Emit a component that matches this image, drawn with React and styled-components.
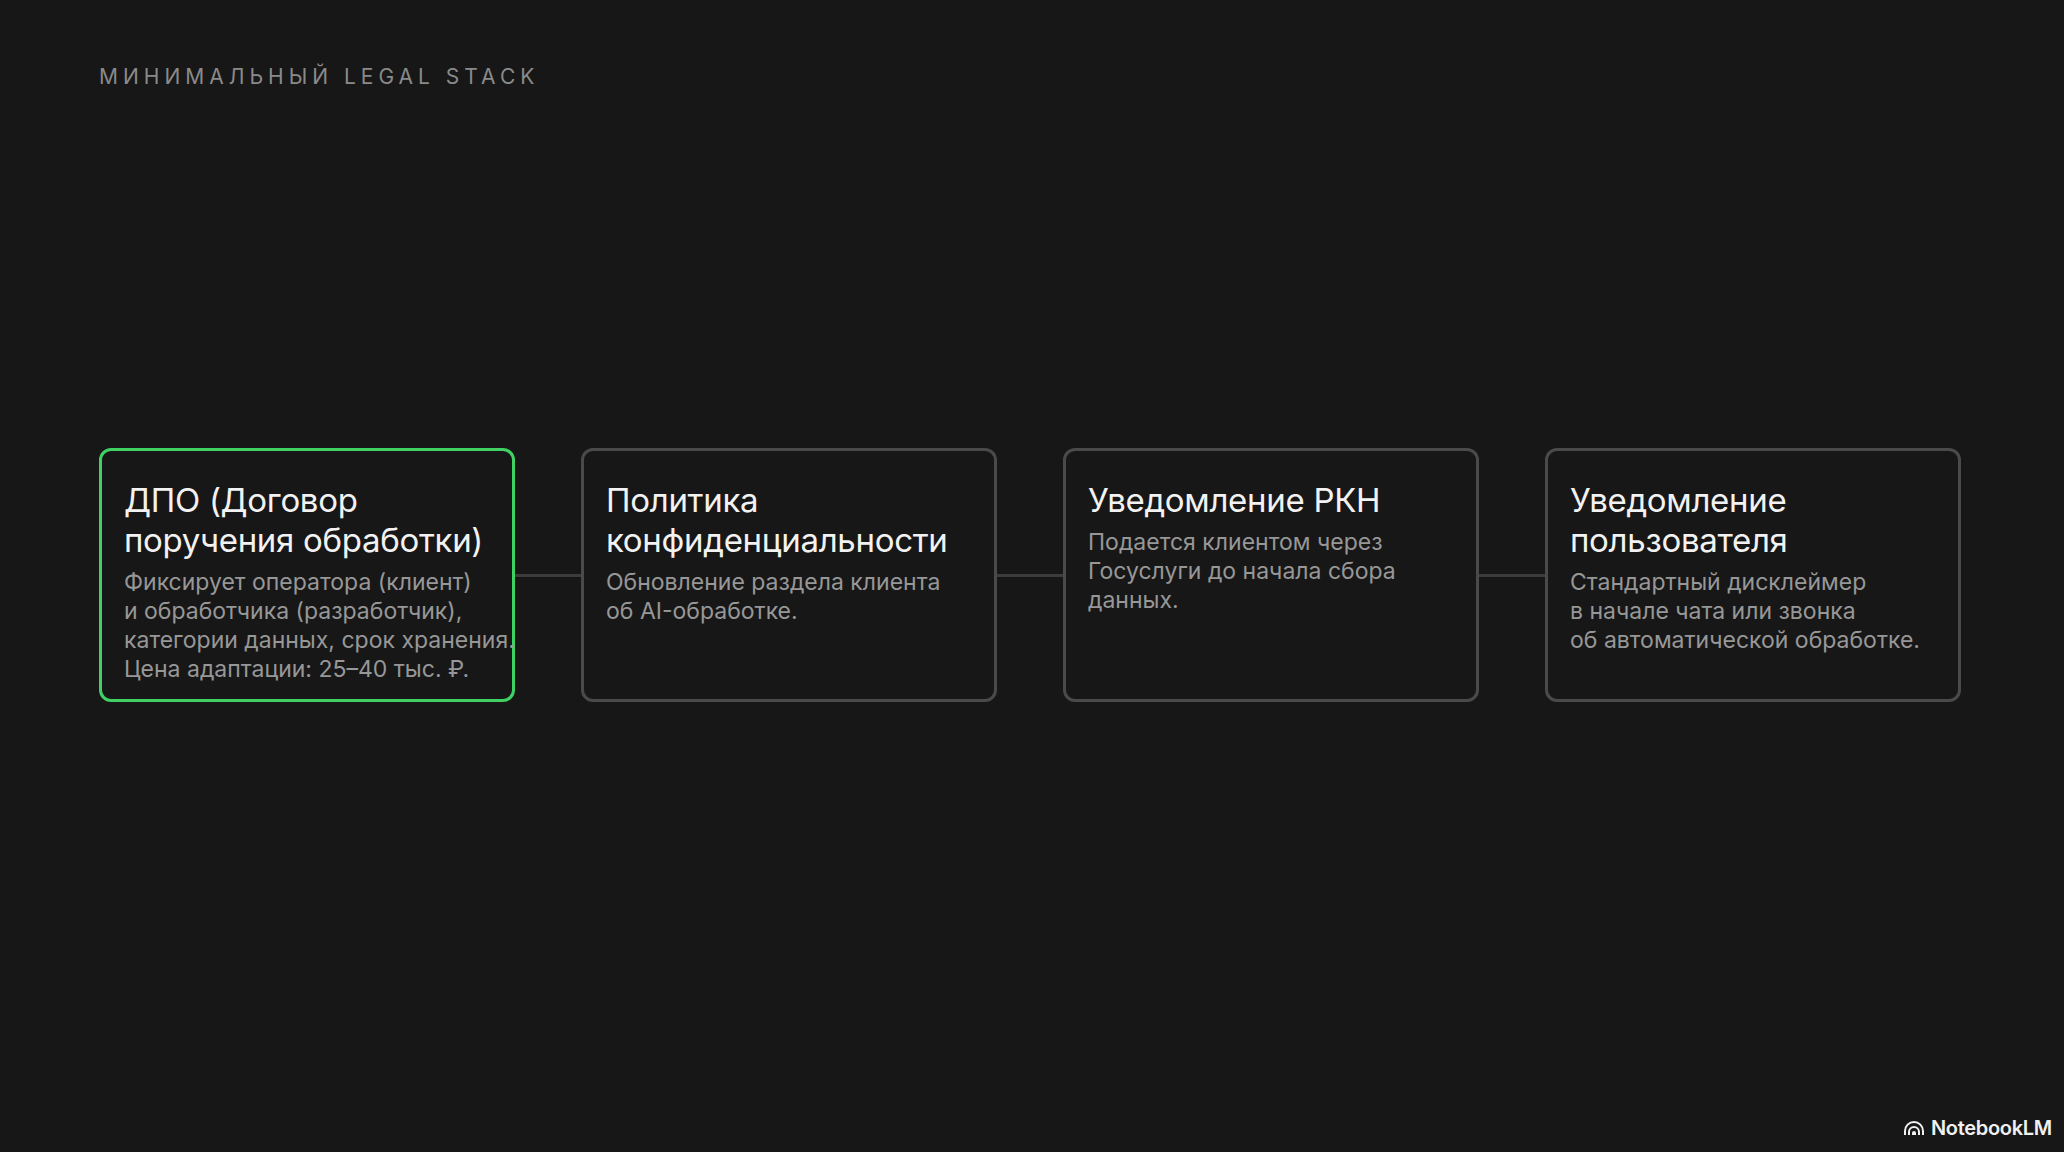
import React from "react";
import styled, { createGlobalStyle } from "styled-components";

const Global = createGlobalStyle`
  html, body { margin: 0; padding: 0; background: #171717; }
  body { font-family: Inter, "Liberation Sans", sans-serif; }
`;

const Page = styled.div`
  width: 2064px; height: 1152px; box-sizing: border-box;
  padding: 64px 100px 0 99px; position: relative; overflow: hidden;
  background: #171717;
`;
const Kicker = styled.div`
  font-size: 21px; letter-spacing: 5px; color: #8a8a8a; text-transform: uppercase;
`;
const Row = styled.div`
  display: flex; align-items: center; margin-top: 359px;
`;
const Card = styled.div`
  width: 416px; height: 254px; box-sizing: border-box; flex: none;
  border: 3px solid ${p => (p.$active ? "#3fd164" : "#4a4a4a")};
  border-radius: 12px; padding: 29px 20px 0 22px;
`;
const Link = styled.div`
  width: 66px; height: 3px; background: #3c3c3c; flex: none;
`;
const Title = styled.div`
  color: #f2f2f2; font-size: 33px; line-height: 40px; letter-spacing: -0.3px; white-space: nowrap;
`;
const Body = styled.div`
  color: #979797; font-size: 23px; line-height: 29px; margin-top: 8px; white-space: nowrap;
`;
const Logo = styled.div`
  position: absolute; right: 12px; bottom: 12px; display: flex; align-items: center; gap: 6px;
  color: #f0f0f0; font-size: 20px; font-weight: 600; letter-spacing: -0.3px;
`;

const cards = [
  { t: ["ДПО (Договор", "поручения обработки)"], b: ["Фиксирует оператора (клиент)", "и обработчика (разработчик),", "категории данных, срок хранения.", "Цена адаптации: 25–40 тыс. ₽."], active: true },
  { t: ["Политика", "конфиденциальности"], b: ["Обновление раздела клиента", "об AI-обработке."] },
  { t: ["Уведомление РКН"], b: ["Подается клиентом через", "Госуслуги до начала сбора", "данных."] },
  { t: ["Уведомление", "пользователя"], b: ["Стандартный дисклеймер", "в начале чата или звонка", "об автоматической обработке."] },
];

export default function App() {
  return (
    <Page>
      <Global />
      <Kicker>Минимальный Legal Stack</Kicker>
      <Row>
        {cards.map((c, i) => (
          <React.Fragment key={i}>
            {i > 0 && <Link />}
            <Card $active={c.active}>
              <Title>{c.t.map((l, j) => <div key={j}>{l}</div>)}</Title>
              <Body>{c.b.map((l, j) => <div key={j}>{l}</div>)}</Body>
            </Card>
          </React.Fragment>
        ))}
      </Row>
      <Logo>
        <svg width="22" height="16" viewBox="0 0 22 16" fill="none" stroke="#f0f0f0" strokeWidth="2">
          <path d="M2 15 V11 A9 9 0 0 1 20 11 V15" />
          <path d="M6 15 V12 A5 5 0 0 1 16 12 V15" />
          <path d="M10 15 V13 A1 1 0 0 1 12 13 V15" />
        </svg>
        NotebookLM
      </Logo>
    </Page>
  );
}
